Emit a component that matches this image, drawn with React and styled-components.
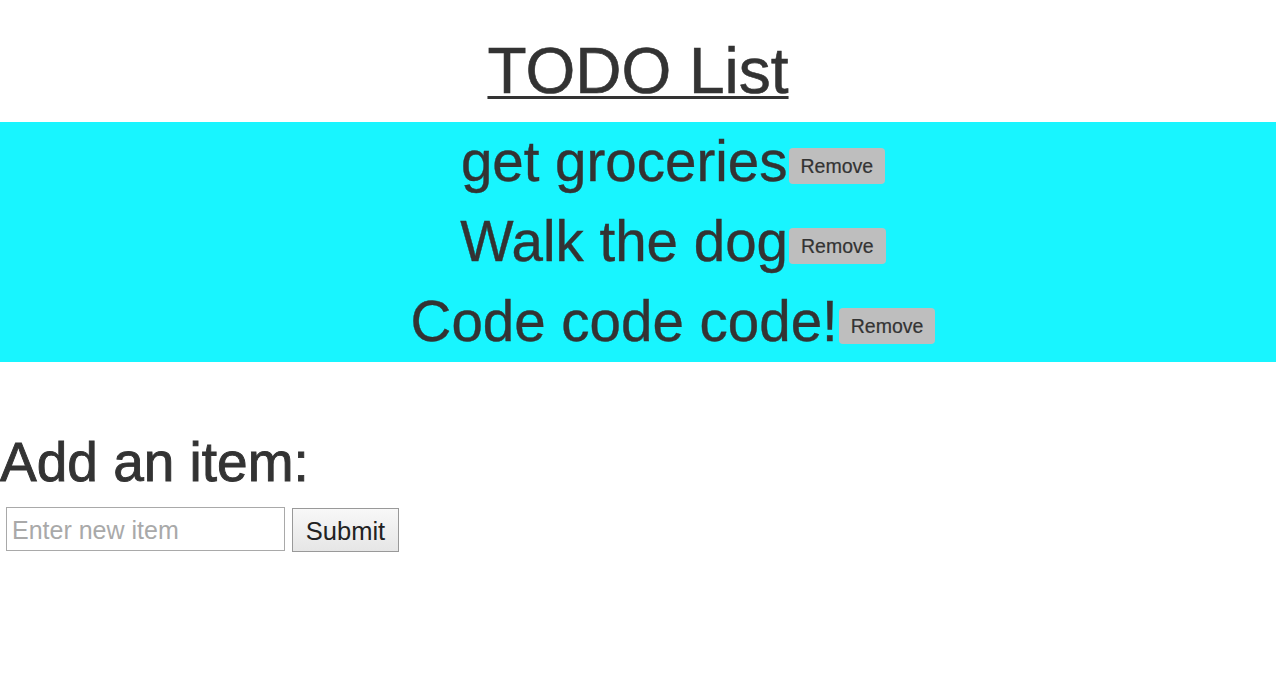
import React from "react";
import styled, { createGlobalStyle } from "styled-components";

const GlobalStyle = createGlobalStyle`
  html, body {
    margin: 0;
    padding: 0;
    background: #ffffff;
  }
  body {
    font-family: "Liberation Sans", Arial, Helvetica, sans-serif;
    color: #333333;
  }
`;

const Page = styled.div`
  display: flex;
  flex-direction: column;
  width: 100%;
`;

const Title = styled.h1`
  margin: 34px 0 14px;
  font-size: 64px;
  line-height: 74px;
  font-weight: normal;
  text-align: center;
  text-decoration: underline;
  text-decoration-thickness: 3px;
  text-underline-offset: 3px;
  -webkit-text-stroke: 0.6px #333333;
`;

const List = styled.ul`
  list-style: none;
  margin: 0;
  padding: 0 0 0 70px;
  background: #18f5ff;
`;

const Item = styled.li`
  font-size: 56.5px;
  line-height: 80px;
  text-align: center;
  white-space: nowrap;
  -webkit-text-stroke: 0.4px #333333;
`;

const RemoveButton = styled.button`
  vertical-align: middle;
  font-family: "Liberation Sans", Arial, Helvetica, sans-serif;
  font-size: 19.5px;
  line-height: 22px;
  color: #333333;
  background: #bebebe;
  border: none;
  border-radius: 4px;
  padding: 7px 12px;
  margin: 0 0 0 1px;
  -webkit-text-stroke: 0.2px #333333;
  cursor: pointer;
`;

const AddHeading = styled.h2`
  margin: 69px 0 14px;
  font-size: 55px;
  line-height: 62px;
  font-weight: normal;
  -webkit-text-stroke: 0.9px #333333;
`;

const Form = styled.form`
  display: flex;
  align-items: flex-start;
  gap: 7px;
  padding-left: 6px;
`;

const Input = styled.input`
  box-sizing: border-box;
  width: 279px;
  height: 44px;
  padding: 3px 5px 0;
  font-family: "Liberation Sans", Arial, Helvetica, sans-serif;
  font-size: 25px;
  color: #333333;
  border: 1px solid #a9a9a9;
  border-radius: 0;
  outline: none;
  &::placeholder {
    color: #a9a9a9;
  }
`;

const SubmitButton = styled.button`
  box-sizing: border-box;
  width: 107px;
  height: 44px;
  margin-top: 1px;
  padding: 2px 0 0;
  font-family: "Liberation Sans", Arial, Helvetica, sans-serif;
  font-size: 25.5px;
  color: #222222;
  border: 1px solid #999999;
  border-radius: 0;
  background: linear-gradient(#f8f8f8, #e6e6e6);
  cursor: pointer;
`;

const items = ["get groceries", "Walk the dog", "Code code code!"];

export default function App() {
  return (
    <Page>
      <GlobalStyle />
      <Title>TODO List</Title>
      <List>
        {items.map((t) => (
          <Item key={t}>
            {t}
            <RemoveButton type="button">Remove</RemoveButton>
          </Item>
        ))}
      </List>
      <AddHeading>Add an item:</AddHeading>
      <Form onSubmit={(e) => e.preventDefault()}>
        <Input type="text" placeholder="Enter new item" />
        <SubmitButton type="submit">Submit</SubmitButton>
      </Form>
    </Page>
  );
}
